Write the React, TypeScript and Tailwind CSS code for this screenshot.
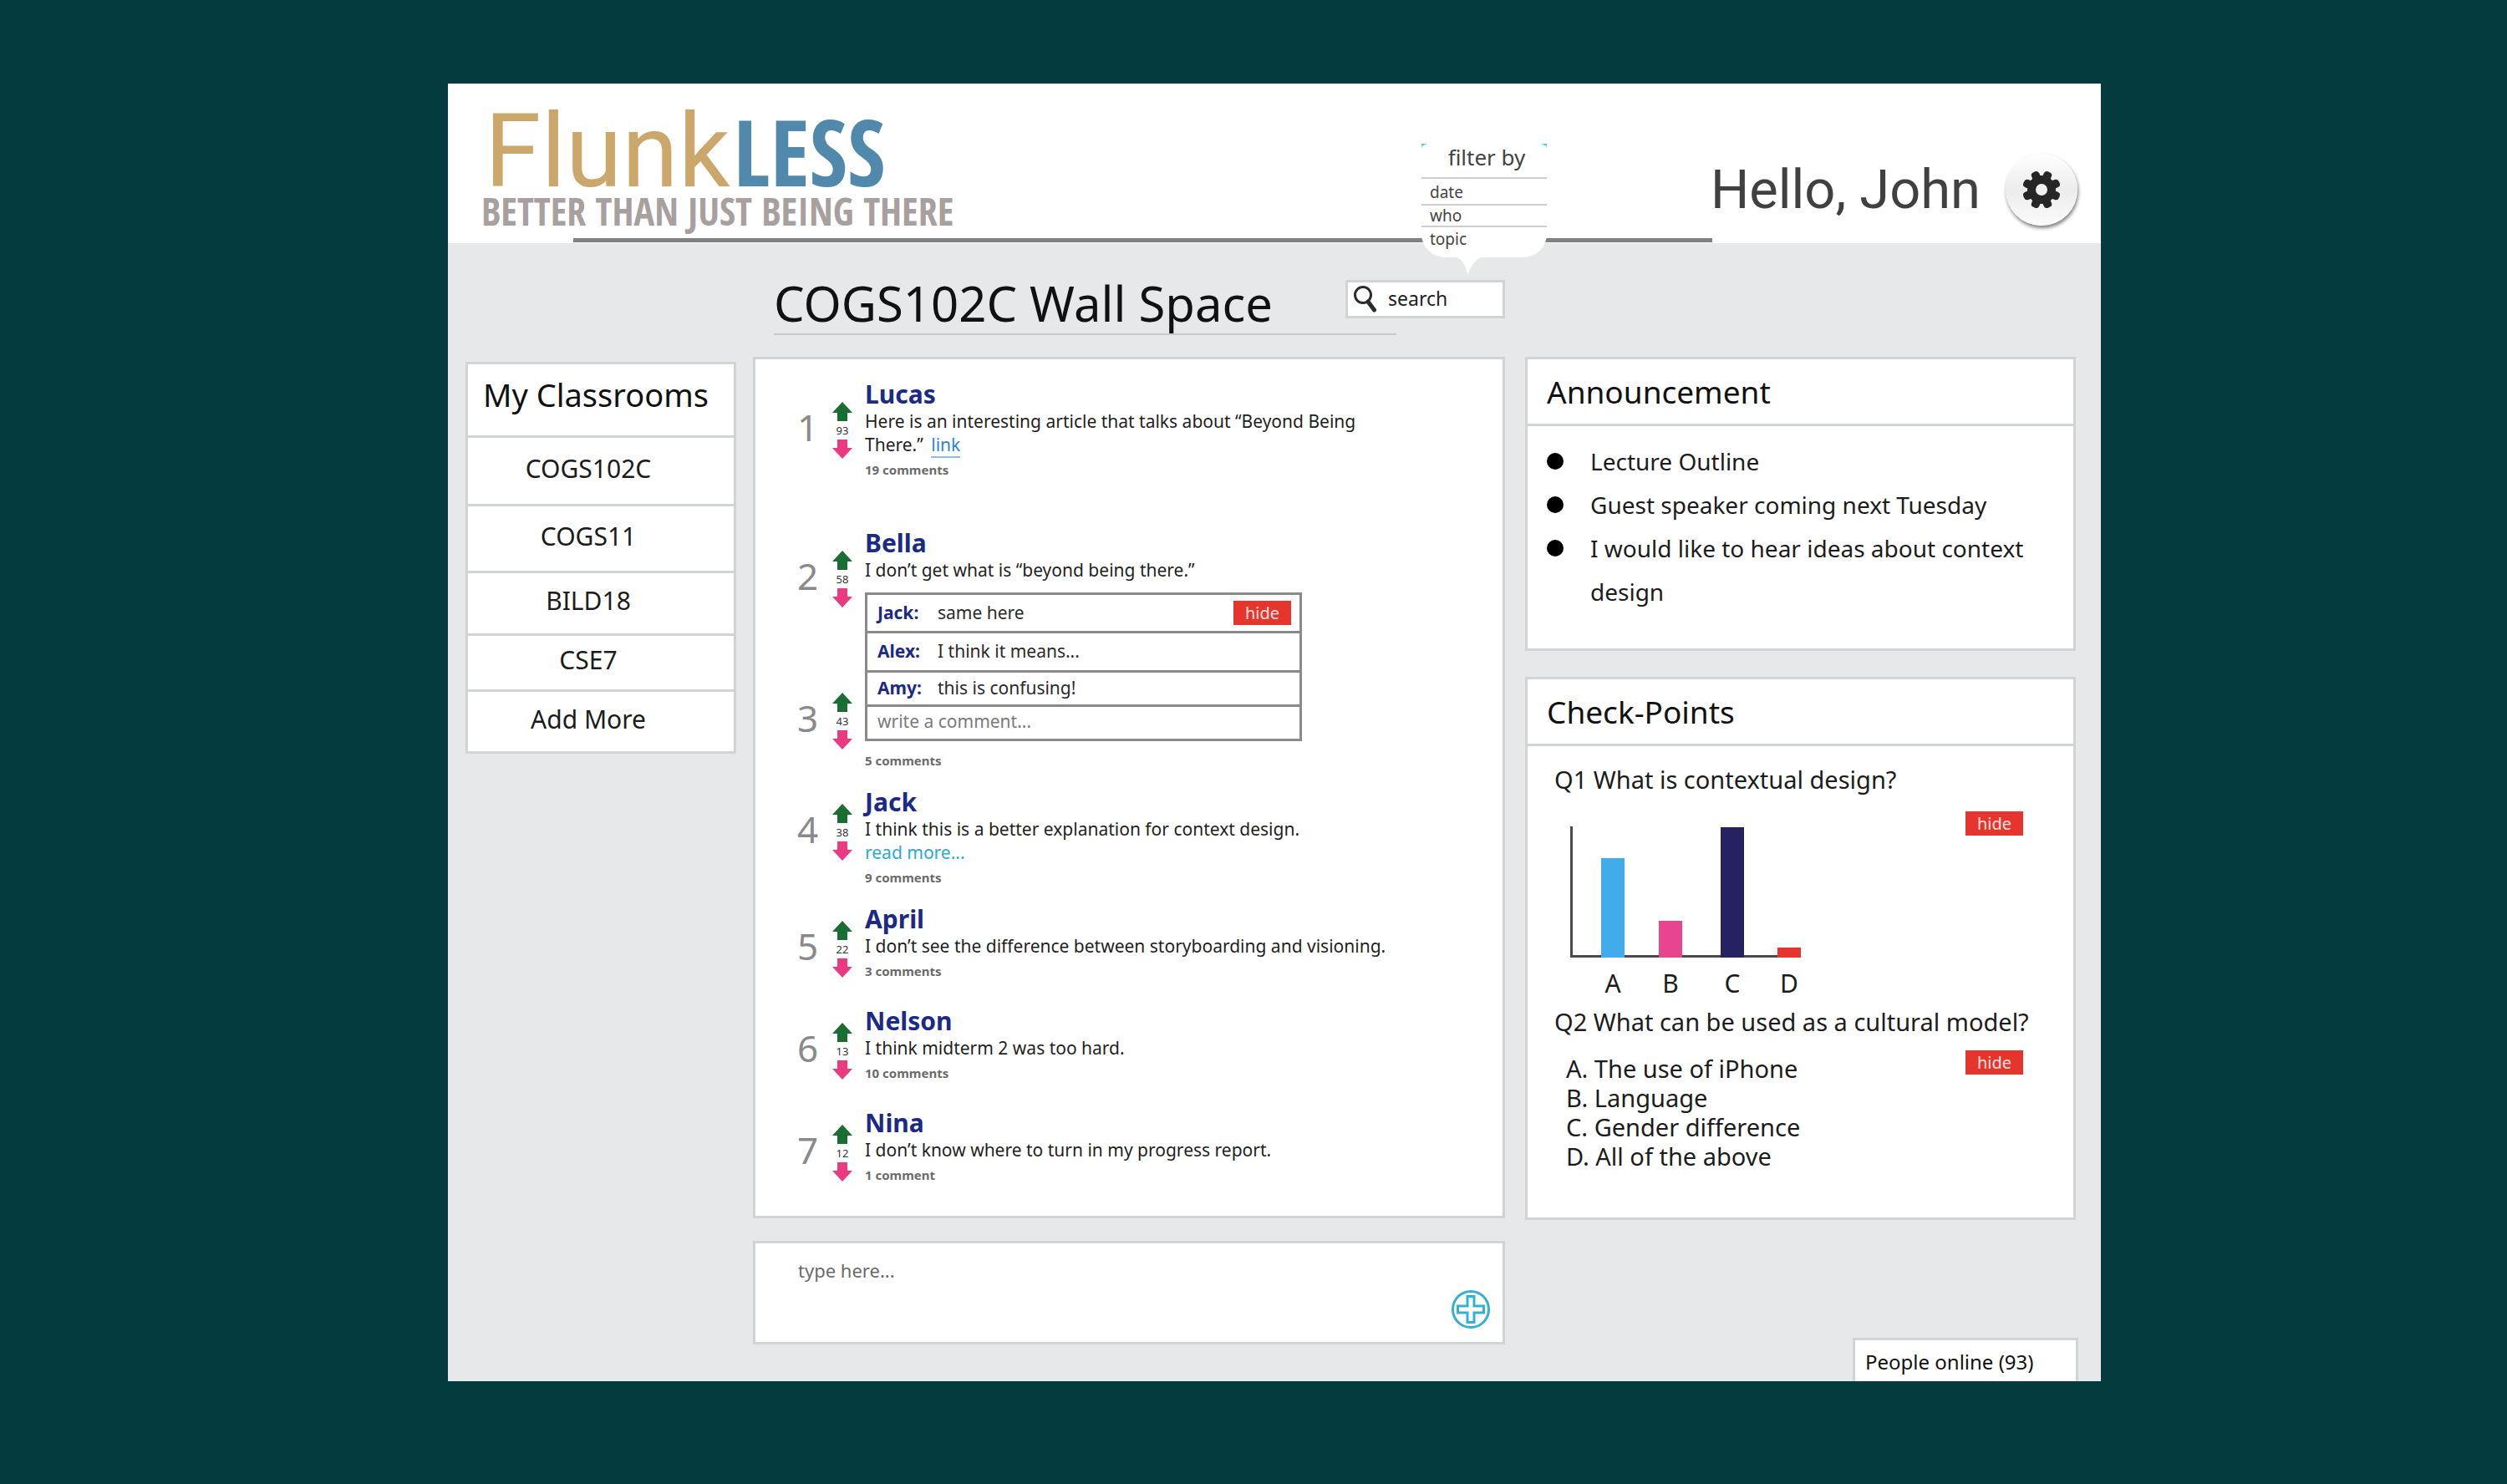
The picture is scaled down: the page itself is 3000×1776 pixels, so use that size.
import type { ReactNode } from "react";

type Comment = { author: string; text: string };

type Post = {
  rank: number;
  votes: number;
  name: string;
  body: ReactNode;
  more?: boolean;
  comments: string;
  spacing: string;
};

const classrooms = [
  { name: "COGS102C", height: "h-[82px]" },
  { name: "COGS11", height: "h-[80px]" },
  { name: "BILD18", height: "h-[75px]" },
  { name: "CSE7", height: "h-[67px]" },
  { name: "Add More", height: "h-[74px]" },
];

const posts: Post[] = [
  {
    rank: 4,
    votes: 38,
    name: "Jack",
    body: "I think this is a better explanation for context design.",
    more: true,
    comments: "9 comments",
    spacing: "mt-5",
  },
  {
    rank: 5,
    votes: 22,
    name: "April",
    body: "I don’t see the difference between storyboarding and visioning.",
    comments: "3 comments",
    spacing: "mt-5",
  },
  {
    rank: 6,
    votes: 13,
    name: "Nelson",
    body: "I think midterm 2 was too hard.",
    comments: "10 comments",
    spacing: "mt-[30px]",
  },
  {
    rank: 7,
    votes: 12,
    name: "Nina",
    body: "I don’t know where to turn in my progress report.",
    comments: "1 comment",
    spacing: "mt-[30px]",
  },
];

const replies: Comment[] = [
  { author: "Jack:", text: "same here" },
  { author: "Alex:", text: "I think it means..." },
  { author: "Amy:", text: "this is confusing!" },
];

const announcements = [
  "Lecture Outline",
  "Guest speaker coming next Tuesday",
  "I would like to hear ideas about context design",
];

const answers = ["A. The use of iPhone", "B. Language", "C. Gender difference", "D. All of the above"];

const bars = [
  { label: "A", x: 40, height: 119, color: "#41abec" },
  { label: "B", x: 109, height: 44, color: "#e8458f" },
  { label: "C", x: 183, height: 156, color: "#262261" },
  { label: "D", x: 251, height: 12, color: "#e5352d" },
];

function Arrow({ up }: { up?: boolean }) {
  return (
    <svg viewBox="0 0 24 23" className="block h-[23px] w-6" aria-hidden="true">
      {up ? (
        <path d="M12 0 L24 13 H18 V23 H6 V13 H0 Z" fill="#1b6e33" />
      ) : (
        <path d="M12 23 L24 10 H18 V0 H6 V10 H0 Z" fill="#e93a82" />
      )}
    </svg>
  );
}

function Vote({ rank, votes }: { rank: number; votes: number }) {
  return (
    <div className="flex">
      <span className="w-[42px] text-[44px] leading-[60px] text-[#8a8a8a]">{rank}</span>
      <div className="flex w-6 flex-col items-center">
        <button type="button" aria-label={`Vote up post ${rank}`}>
          <Arrow up />
        </button>
        <span className="text-[13px] leading-[22px] text-[#333]">{votes}</span>
        <button type="button" aria-label={`Vote down post ${rank}`}>
          <Arrow />
        </button>
      </div>
    </div>
  );
}

function HideButton() {
  return (
    <button
      type="button"
      className="h-[29px] w-[69px] shrink-0 bg-[#e5352d] text-center text-[20px] leading-[28px] text-[#fbe3e1]"
    >
      hide
    </button>
  );
}

function PostName({ children }: { children: ReactNode }) {
  return <h3 className="text-[30px] leading-[36px] font-bold text-[#1b2a86]">{children}</h3>;
}

function CommentCount({ children }: { children: ReactNode }) {
  return (
    <button type="button" className="mt-1 block text-[15px] leading-[24px] font-bold text-[#6b6b6b]">
      {children}
    </button>
  );
}

function PanelTitle({ children }: { children: ReactNode }) {
  return (
    <h2 className="h-20 border-b-3 border-[#d2d3d4] pl-[23px] text-[37px] leading-[78px]">{children}</h2>
  );
}

function Gear() {
  return (
    <svg viewBox="-24 -24 48 48" className="size-12" aria-hidden="true">
      <g fill="#262626">
        {[22.5, 67.5, 112.5, 157.5].map((a) => (
          <rect key={a} x="-5" y="-23" width="10" height="46" rx="4" transform={`rotate(${a})`} />
        ))}
        <circle r="17" />
      </g>
      <circle r="7" fill="#f1f1f1" />
    </svg>
  );
}

function Header() {
  return (
    <header className="flex flex-col bg-white">
      <div className="flex h-[185px] justify-between">
        <div className="pt-[21px] pl-10">
          <h1 className="ml-1 flex items-baseline gap-1">
            <span className="font-[Roboto] text-[122px] leading-[122px] text-[#cba76b]">Flunk</span>
            <span className="font-['Open_Sans_Condensed'] text-[110px] leading-[106px] font-bold text-[#5089ab]">
              LESS
            </span>
          </h1>
          <p className="-mt-[14px] font-['Open_Sans_Condensed'] text-[46px] leading-[46px] font-bold text-[#a8a09f]">
            BETTER THAN JUST BEING THERE
          </p>
        </div>
        <div className="flex items-start gap-[30px] pt-[84px] pr-[28px]">
          <span className="font-[Roboto] text-[65px] leading-[86px] text-[#404040]">Hello, John</span>
          <button
            type="button"
            aria-label="Settings"
            className="flex size-[86px] items-center justify-center rounded-full bg-linear-to-b from-white via-[#ececec] to-[#fbfbfb] shadow-[1px_3px_4px_#7d7d7d]"
          >
            <Gear />
          </button>
        </div>
      </div>
      <div className="mr-[465px] mb-px ml-[150px] h-[5px] bg-[#808080]" />
    </header>
  );
}

function FilterMenu() {
  return (
    <div className="absolute -right-[50px] bottom-full mb-[7px] w-[150px]">
      <div className="bg-linear-to-b from-[#35bfe8] from-0% to-transparent to-[6px]">
        <div className="rounded-[8px] rounded-b-[28px] bg-white text-[19px] text-[#444]">
          <div className="h-[42px] border-b-2 border-[#cfcfcf] pl-[6px] text-center text-[26px] leading-[32px]">
            filter by
          </div>
          <button type="button" className="block h-8 w-full border-b-2 border-[#cfcfcf] pl-[10px] text-left leading-8">
            date
          </button>
          <button type="button" className="block h-[26px] w-full border-b-2 border-[#cfcfcf] pl-[10px] text-left leading-6">
            who
          </button>
          <button type="button" className="block h-9 w-full pb-2 pl-[10px] text-left leading-[26px]">
            topic
          </button>
        </div>
      </div>
      <svg viewBox="0 0 28 20" className="ml-[43px] block h-5 w-7" aria-hidden="true">
        <path d="M0 0 H28 Q20 3 12 20 Q9 5 0 0 Z" fill="#fff" />
      </svg>
    </div>
  );
}

function Sidebar() {
  return (
    <nav className="mt-[142px] w-[324px] shrink-0 self-start border-3 border-[#d2d3d4] bg-white">
      <h2 className="h-[85px] pl-[18px] text-[38px] leading-[73px]">My Classrooms</h2>
      {classrooms.map((room) => (
        <a
          key={room.name}
          href="#"
          className={`flex items-center justify-center border-t-3 border-[#d2d3d4] pr-[30px] pb-1.5 text-[30px] leading-[40px] text-[#1c1c1c] ${room.height}`}
        >
          {room.name}
        </a>
      ))}
    </nav>
  );
}

function ReplyBox() {
  const heights = ["h-[46px]", "h-[47px]", "h-[41px]"];
  return (
    <div className="mt-[13px] w-[523px] border-3 border-[#8a8a8a] text-[21px]">
      {replies.map((reply, i) => (
        <div key={reply.author} className={`flex items-center border-b-3 border-[#8a8a8a] pr-[10px] pl-3 ${heights[i]}`}>
          <span className="w-[72px] font-bold text-[#1b2a86]">{reply.author}</span>
          <span className="flex-1 text-[#2a2a2a]">{reply.text}</span>
          {i === 0 && <HideButton />}
        </div>
      ))}
      <input
        type="text"
        aria-label="Write a comment"
        placeholder="write a comment..."
        className="block h-[38px] w-full pb-1 pl-3 outline-none placeholder:text-[#7a7a7a]"
      />
    </div>
  );
}

function Wall() {
  return (
    <section className="border-3 border-[#d2d3d4] bg-white pt-6 pb-[37px] pl-[50px]">
      <article className="flex">
        <div className="mr-[15px] pt-[27px]">
          <Vote rank={1} votes={93} />
        </div>
        <div>
          <PostName>Lucas</PostName>
          <p className="max-w-[640px] text-[21px] leading-[28px] text-[#1f1f1f]">
            Here is an interesting article that talks about “Beyond Being There.”{" "}
            <a href="#" className="ml-1 border-b-2 border-[#8fbbe0] text-[#2f84d0]">
              link
            </a>
          </p>
          <CommentCount>19 comments</CommentCount>
        </div>
      </article>

      <div className="mt-[58px] flex">
        <div className="mr-[15px] flex flex-col gap-[102px] pt-[27px]">
          <Vote rank={2} votes={58} />
          <Vote rank={3} votes={43} />
        </div>
        <article>
          <PostName>Bella</PostName>
          <p className="text-[21px] leading-[28px] text-[#1f1f1f]">I don’t get what is “beyond being there.”</p>
          <ReplyBox />
          <div className="pt-[7px]">
            <CommentCount>5 comments</CommentCount>
          </div>
        </article>
      </div>

      {posts.map((post) => (
        <article key={post.rank} className={`flex ${post.spacing}`}>
          <div className="mr-[15px] pt-5">
            <Vote rank={post.rank} votes={post.votes} />
          </div>
          <div>
            <PostName>{post.name}</PostName>
            <p className="text-[21px] leading-[28px] text-[#1f1f1f]">{post.body}</p>
            {post.more && (
              <a href="#" className="block text-[21px] leading-[28px] text-[#27aadf]">
                read more...
              </a>
            )}
            <CommentCount>{post.comments}</CommentCount>
          </div>
        </article>
      ))}
    </section>
  );
}

function Composer() {
  return (
    <form className="mt-[27px] flex h-[124px] border-3 border-[#d2d3d4] bg-white">
      <textarea
        aria-label="New post"
        placeholder="type here..."
        className="flex-1 resize-none pt-[18px] pl-[51px] text-[22px] leading-[28px] outline-none placeholder:text-[#6a6a6a]"
      />
      <button type="button" aria-label="Add post" className="mr-[14px] mb-[15px] self-end">
        <svg viewBox="0 0 48 48" className="block size-12" fill="none" stroke="#34b0d6" strokeWidth="3" aria-hidden="true">
          <circle cx="24" cy="24" r="21.5" />
          <path d="M20 8.5 H28 V20 H39.5 V28 H28 V39.5 H20 V28 H8.5 V20 H20 Z" />
        </svg>
      </button>
    </form>
  );
}

function Chart() {
  return (
    <svg viewBox="0 0 282 214" className="mt-9 block h-[214px] w-[282px]" role="img" aria-label="Answers to question 1">
      <path d="M4.5 0 V155.5 H278" fill="none" stroke="#4a4a4a" strokeWidth="3" />
      {bars.map((bar) => (
        <g key={bar.label}>
          <rect x={bar.x} y={157 - bar.height} width="28" height={bar.height} fill={bar.color} />
          <text x={bar.x + 14} y="199" textAnchor="middle" fontSize="30" fill="#1c1c1c">
            {bar.label}
          </text>
        </g>
      ))}
    </svg>
  );
}

function CheckPoints() {
  return (
    <section className="mt-[31px] border-3 border-[#d2d3d4] bg-white pb-14">
      <PanelTitle>Check-Points</PanelTitle>
      <div className="pr-[60px] pl-8 text-[29px] text-[#1c1c1c]">
        <h3 className="mt-5 leading-[40px]">Q1 What is contextual design?</h3>
        <div className="flex items-start justify-between pl-4">
          <Chart />
          <div className="mt-[18px] flex">
            <HideButton />
          </div>
        </div>
        <h3 className="-mr-8 leading-[40px]">Q2 What can be used as a cultural model?</h3>
        <div className="flex items-start justify-between pl-[14px]">
          <ul className="mt-[18px] leading-[35px]">
            {answers.map((answer) => (
              <li key={answer}>{answer}</li>
            ))}
          </ul>
          <div className="mt-[14px] flex">
            <HideButton />
          </div>
        </div>
      </div>
    </section>
  );
}

export default function App() {
  return (
    <div className="min-h-screen bg-[#033b3e] pt-[100px] pr-[486px] pb-[123px] pl-[536px] font-['Noto_Sans','Open_Sans',sans-serif] text-[#111]">
      <div className="bg-[#e7e8ea]">
        <Header />
        <main className="flex pr-[30px] pl-[21px]">
          <Sidebar />
          <div className="ml-5 min-w-0 flex-1 pb-[44px]">
            <div className="flex items-start pt-9">
              <h2 className="ml-[25px] flex-1 border-b-2 border-[#c9cacb] text-[58px] leading-[72px]">COGS102C Wall Space</h2>
              <div className="relative mt-2 -ml-[61px] w-[191px]">
                <FilterMenu />
                <label className="flex h-[46px] items-center border-3 border-[#d2d3d4] bg-white pl-[7px]">
                  <svg viewBox="0 0 28 34" className="h-[34px] w-7 shrink-0" fill="none" stroke="#2b2b2b" aria-hidden="true">
                    <circle cx="11" cy="12" r="9.5" strokeWidth="3" />
                    <path d="M17 20 L24.5 30" strokeWidth="5" strokeLinecap="round" />
                  </svg>
                  <input
                    type="text"
                    aria-label="Search"
                    placeholder="search"
                    className="w-full min-w-0 pb-0.5 pl-[13px] text-[23px] leading-[32px] outline-none placeholder:text-[#222]"
                  />
                </label>
              </div>
            </div>
            <div className="mt-[26px]">
              <Wall />
            </div>
            <Composer />
          </div>
          <aside className="ml-6 flex w-[659px] shrink-0 flex-col pt-[136px]">
            <section className="border-3 border-[#d2d3d4] bg-white pb-[42px]">
              <PanelTitle>Announcement</PanelTitle>
              <ul className="pt-4 pr-8 pl-[23px] text-[28px] leading-[52px] text-[#1c1c1c]">
                {announcements.map((item) => (
                  <li key={item} className="flex gap-8">
                    <span className="mt-4 size-5 shrink-0 rounded-full bg-black" />
                    <span>{item}</span>
                  </li>
                ))}
              </ul>
            </section>
            <CheckPoints />
            <button
              type="button"
              className="mt-auto -mr-[3px] ml-auto block w-[270px] border-3 border-b-0 border-[#d2d3d4] bg-white pt-[3px] pl-3 text-left text-[24px] leading-[46px]"
            >
              People online (93)
            </button>
          </aside>
        </main>
      </div>
    </div>
  );
}
